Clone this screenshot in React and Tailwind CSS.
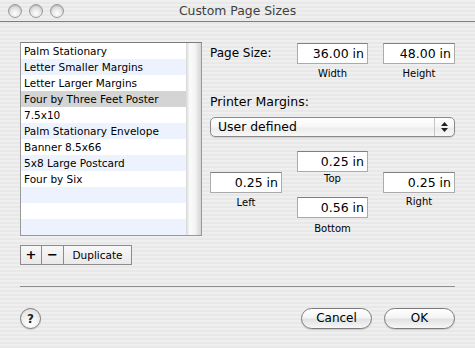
import React from "react";

const items = [
  "Palm Stationary",
  "Letter Smaller Margins",
  "Letter Larger Margins",
  "Four by Three Feet Poster",
  "7.5x10",
  "Palm Stationary Envelope",
  "Banner 8.5x66",
  "5x8 Large Postcard",
  "Four by Six",
  "",
  "",
  "",
];

const stripes =
  "[background-image:repeating-linear-gradient(180deg,#efefef_0px,#efefef_2px,#e8e8e8_2px,#e8e8e8_4px)]";

const Field = ({ value }) => (
  <div className="h-[21px] w-full border border-[#ababab] border-t-[#808080] bg-white pr-[3px] text-right text-[12.5px] leading-[19px] text-black">
    {value}
  </div>
);

const Caption = ({ children, className = "" }) => (
  <div className={`text-center text-[10px] leading-[12px] text-black ${className}`}>{children}</div>
);

const Light = () => (
  <div className="h-[14px] w-[14px] rounded-full border border-[#9b9b9b] bg-[radial-gradient(circle_at_50%_70%,#ffffff_0%,#e6e6e6_45%,#c4c4c4_100%)] shadow-[inset_0_1px_1px_rgba(0,0,0,0.15)]" />
);

const PushButton = ({ children }) => (
  <div className="h-[21px] w-[71px] rounded-full border border-[#7b7b7b] bg-[linear-gradient(180deg,#ffffff_0%,#f4f4f4_45%,#e2e2e2_55%,#f7f7f7_100%)] text-center text-[12px] leading-[19px] text-black shadow-[0_1px_1px_rgba(0,0,0,0.15)]">
    {children}
  </div>
);

export default function App() {
  return (
    <div className={`h-[348px] w-[475px] overflow-hidden bg-[#ececec] ${stripes} font-['DejaVu_Sans',sans-serif] text-black`}>
      {/* title bar */}
      <div className="grid h-[22px] grid-cols-[1fr_auto_1fr] items-center border-b border-[#7e7e7e]">
        <div className="flex gap-[7px] pl-[8px]">
          <Light />
          <Light />
          <Light />
        </div>
        <div className="text-[12.4px] leading-[21px] text-[#404040]">Custom Page Sizes</div>
        <div />
      </div>

      <div className="px-[20px] pt-[20px]">
        <div className="flex gap-[8px]">
          {/* list */}
          <div>
            <div className="flex h-[194px] w-[182px] border border-[#999999] border-t-[#7c7c7c] bg-white">
              <div className="w-[165px]">
                {items.map((name, i) => (
                  <div
                    key={i}
                    className={`h-[16px] whitespace-nowrap pl-[3px] text-[10.5px] leading-[16px] ${
                      i === 3 ? "bg-[#d4d4d4]" : i % 2 === 1 ? "bg-[#edf3fe]" : "bg-white"
                    }`}
                  >
                    {name}
                  </div>
                ))}
              </div>
              <div className="flex-1 bg-[linear-gradient(90deg,#d6d6d6_0%,#fbfbfb_25%,#f4f4f4_60%,#d4d4d4_100%)]" />
            </div>
            <div className="mt-[9px] flex h-[20px] w-[112px] border border-[#8c8c8c] bg-[linear-gradient(180deg,#f8f8f8,#e9e9e9)] text-center">
              <div className="w-[21px] border-r border-[#8c8c8c] text-[13px] font-bold leading-[18px]">+</div>
              <div className="w-[22px] border-r border-[#8c8c8c] text-[13px] font-bold leading-[18px]">−</div>
              <div className="flex-1 text-[10.5px] leading-[18px]">Duplicate</div>
            </div>
          </div>

          {/* right panel */}
          <div className="w-[245px]">
            <div className="mt-[1px] grid grid-cols-[72px_71px_72px] gap-x-[15px]">
              <div className="text-[12px] leading-[21px]">Page Size:</div>
              <div>
                <Field value="36.00 in" />
                <Caption className="mt-[4px]">Width</Caption>
              </div>
              <div>
                <Field value="48.00 in" />
                <Caption className="mt-[4px]">Height</Caption>
              </div>
            </div>

            <div className="mt-[14px] text-[12.5px] leading-[15px]">Printer Margins:</div>

            <div className="mt-[8px] flex h-[20px] items-stretch rounded-[5px] border border-[#8a8a8a] bg-[linear-gradient(180deg,#ffffff_0%,#f6f6f6_50%,#ececec_55%,#f8f8f8_100%)] shadow-[0_1px_1px_rgba(0,0,0,0.12)]">
              <div className="flex-1 pl-[7px] text-[12.4px] leading-[18px]">User defined</div>
              <div className="flex w-[20px] flex-col items-center justify-center gap-[2px] border-l border-[#c4c4c4]">
                <svg width="7" height="4" viewBox="0 0 7 4">
                  <path d="M3.5 0 L7 4 L0 4 Z" fill="#222" />
                </svg>
                <svg width="7" height="4" viewBox="0 0 7 4">
                  <path d="M0 0 L7 0 L3.5 4 Z" fill="#222" />
                </svg>
              </div>
            </div>

            <div className="mt-[14px] grid grid-cols-[72px_71px_72px] gap-x-[15px]">
              <div className="mt-[21px]">
                <Field value="0.25 in" />
                <Caption className="mt-[4px]">Left</Caption>
              </div>
              <div>
                <Field value="0.25 in" />
                <Caption className="mt-[1px]">Top</Caption>
                <div className="mt-[12px]">
                  <Field value="0.56 in" />
                </div>
                <Caption className="mt-[5px]">Bottom</Caption>
              </div>
              <div className="mt-[21px]">
                <Field value="0.25 in" />
                <Caption className="mt-[3px]">Right</Caption>
              </div>
            </div>
          </div>
        </div>

        <div className="mt-[21px] h-px bg-[#8f8f8f]" />

        <div className="mt-[21px] flex items-center">
          <div className="flex h-[21px] w-[21px] items-center justify-center rounded-full border border-[#7b7b7b] bg-[radial-gradient(circle_at_50%_75%,#ffffff_0%,#f0f0f0_50%,#d8d8d8_100%)] text-[12px] font-bold leading-none text-[#222] shadow-[0_1px_1px_rgba(0,0,0,0.15)]">
            ?
          </div>
          <div className="ml-auto flex gap-[12px]">
            <PushButton>Cancel</PushButton>
            <PushButton>OK</PushButton>
          </div>
        </div>
      </div>
    </div>
  );
}
